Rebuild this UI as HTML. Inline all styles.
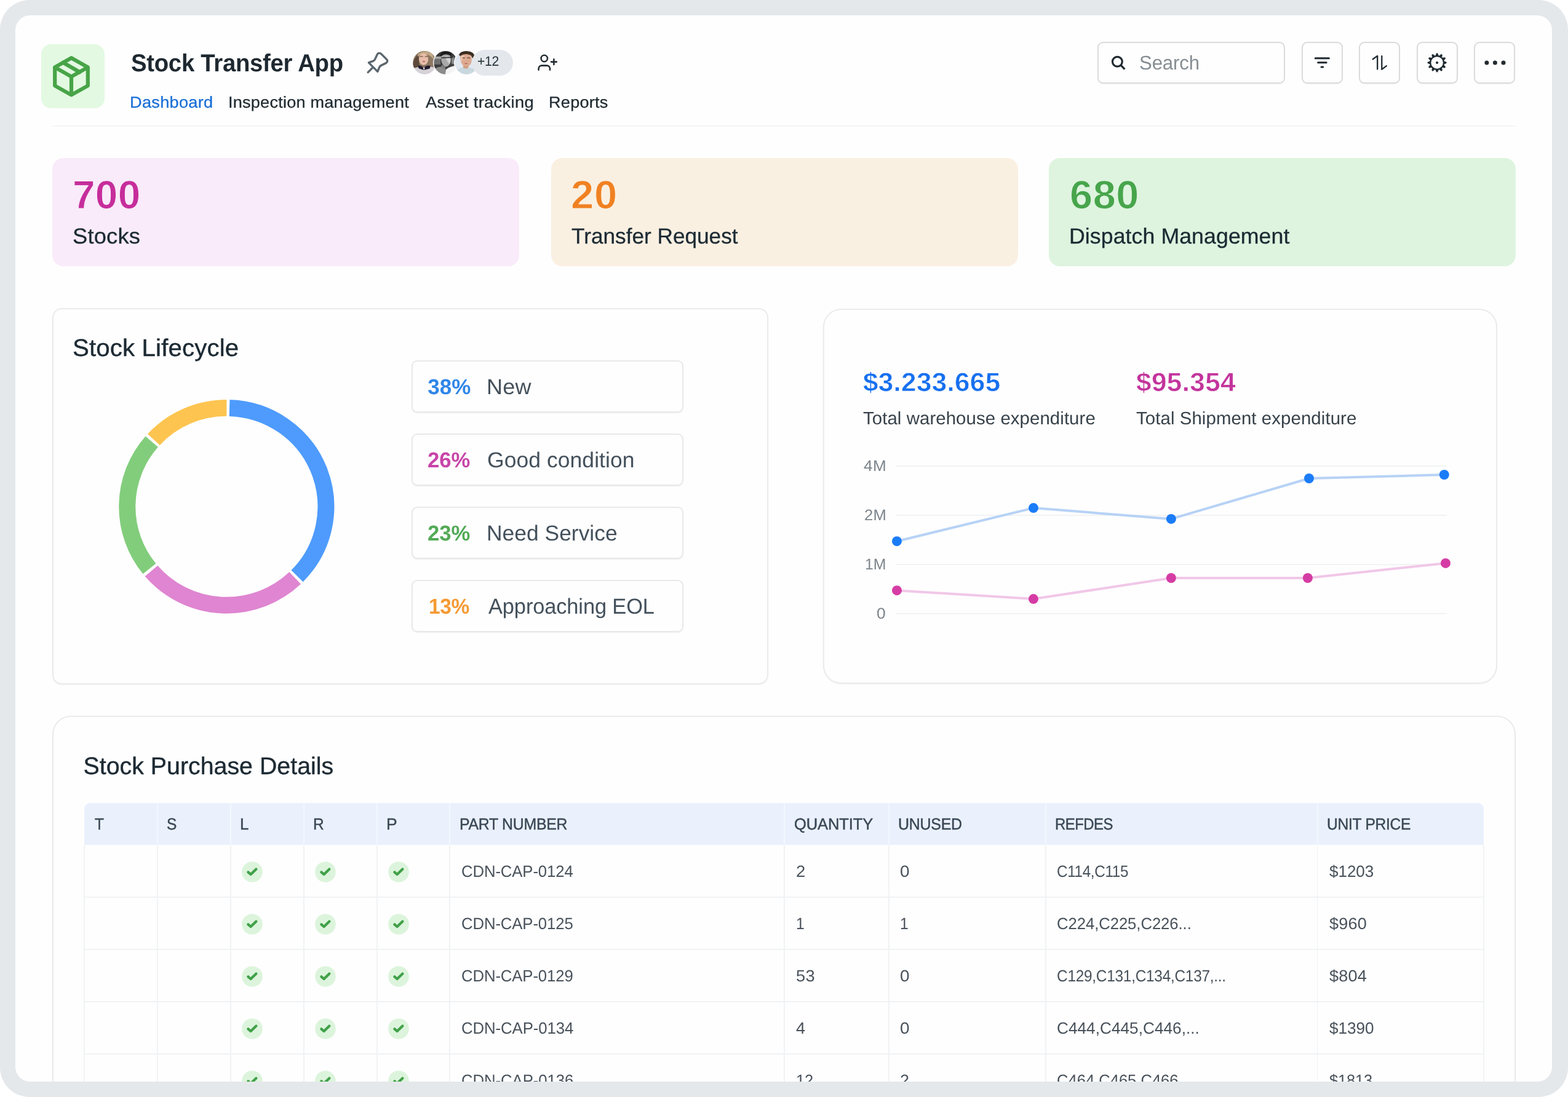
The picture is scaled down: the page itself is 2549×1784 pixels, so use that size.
<!DOCTYPE html>
<html lang="en">
<head>
<meta charset="utf-8">
<title>Stock Transfer App</title>
<style>
*{box-sizing:border-box;margin:0;padding:0}
html,body{width:2549px;height:1784px;background:#fff;overflow:hidden}
body{position:relative;font-family:"Liberation Sans",sans-serif;color:#1c2a33}
.frame{position:absolute;left:0;top:0;width:2549px;height:1784px;background:#e5e8eb;border-radius:48px}
.panel{position:absolute;left:25px;top:25px;width:2498px;height:1734px;background:#fefefe;border-radius:24px;overflow:hidden}
.page{position:absolute;left:-25px;top:-25px;width:2549px;height:1784px;will-change:transform}
.abs{position:absolute}
.t{position:absolute;white-space:nowrap;line-height:1;transform-origin:0 0;text-rendering:geometricPrecision}
.logo{left:66.5px;top:72px;width:103.5px;height:104px;border-radius:16px;background:#e3f9e2}
.hr{left:84.5px;top:203.8px;width:2379px;height:1.8px;background:#f3f5f6}
.search{left:1784px;top:68px;width:305.3px;height:67.8px;border:2.3px solid #d9dbdc;border-radius:9px;box-shadow:0 1px 1.5px rgba(16,24,40,.06)}
.btn{top:68px;width:67px;height:67.8px;border:2.3px solid #d9dbdc;border-radius:9px;box-shadow:0 1px 1.5px rgba(16,24,40,.06)}
.pill{left:767.4px;top:81px;width:66.4px;height:41.8px;border-radius:21px;background:#e4e8ec}
.stat{top:257px;width:759px;height:176px;border-radius:18px}
.card{border:2px solid #e9ebec;background:#fefefe;box-shadow:0 1px 2px rgba(16,24,40,.05)}
.leg{left:669px;width:442px;height:85.4px;border:2px solid #e7e9ea;border-radius:9px;box-shadow:0 1px 1.5px rgba(16,24,40,.07)}
.grid{left:1456px;width:896px;height:2px;background:#f2f3f4}
.vl{top:1374.3px;width:1.8px;height:400px;background:#f0f2f4}
.hl{left:137px;width:2275px;height:1.8px;background:#f0f2f4}
</style>
</head>
<body>
<div class="frame"></div>
<div class="panel"><div class="page">

<div class="abs logo"></div>
<svg class="abs" style="left:80px;top:86px" width="72" height="76" viewBox="80 86 72 76" fill="none" stroke="#47a447" stroke-width="6.2" stroke-linejoin="round" stroke-linecap="round">
  <path d="M116 94.2 L142.8 109.4 L142.8 139.4 L116 154.4 L89.2 139.4 L89.2 109.4 Z"/>
  <path d="M89.6 109.6 L116 124.6 L142.4 109.6 M116 124.6 L116 154"/>
  <path d="M102.6 101.8 L129.6 117.2"/>
</svg>
<svg class="abs" style="left:592px;top:80px" width="44" height="44" viewBox="592 80 44 44" fill="none" stroke="#5a666f" stroke-width="3.4" stroke-linejoin="round" stroke-linecap="round">
  <path d="M598.2 117.6 L606.2 109.6"/>
  <path d="M599.4 101.9 L606.4 99.4 C608 98.8 608.9 98 609.6 96.4 L613.2 88.6 C614.4 86 617.6 85.6 619.6 87.6 L628.4 96.4 C630.4 98.4 630 101.4 627.4 102.6 L619.6 106.4 C618 107.2 617.2 108 616.6 109.6 L613.8 116.4 Z"/>
</svg>
<svg class="abs" style="left:666px;top:78px" width="116" height="48" viewBox="666 78 116 48">
  <filter id="bl" x="-10%" y="-10%" width="120%" height="120%"><feGaussianBlur stdDeviation="0.75"/></filter>
  <clipPath id="c1"><circle cx="690.2" cy="101.9" r="19"/></clipPath>
  <clipPath id="c2"><circle cx="724.2" cy="101.9" r="19"/></clipPath>
  <clipPath id="c3"><circle cx="758.2" cy="101.9" r="19"/></clipPath>
  <g clip-path="url(#c1)"><g filter="url(#bl)" transform="translate(671.2 82.9)">
    <rect x="-3" y="-3" width="44" height="44" fill="#cbbfb8"/>
    <path d="M-2 30 Q-1 6 10 1 Q20 -3 31 3 Q40 10 40 30 Z" fill="#8d7764"/>
    <path d="M-2 30 Q1 10 9 6 L11 27 Z" fill="#5f4a3b"/>
    <path d="M8 5 Q19 -3 31 4 Q34 8 33 13 Q26 4 17 5 Q12 5 8 9 Z" fill="#c3aa86"/>
    <ellipse cx="17.4" cy="13.2" rx="7.6" ry="9.6" fill="#e6bda9"/>
    <path d="M11.5 9.5 Q14 8 16.5 9.6 M19.5 9.6 Q22 8 24.5 9.5" stroke="#7a5a48" stroke-width="1.3" fill="none"/>
    <ellipse cx="17.8" cy="17" rx="2.4" ry="1" fill="#b8665f"/>
    <path d="M-3 30 Q8 24 18 27 Q30 23 41 30 L41 41 L-3 41 Z" fill="#d6d2d8"/>
    <path d="M8.5 24 Q13 22.5 17.5 27.5 Q22 22.5 28.5 24 L27.5 28.6 L17.8 31 L9.5 28.4 Z" fill="#201c2e"/>
    <path d="M16.4 27 L18 31.6 L19.6 27 Z" fill="#e9e3e6"/>
  </g></g>
  <circle cx="724.2" cy="101.9" r="20.3" fill="#fefefe"/>
  <g clip-path="url(#c2)"><g filter="url(#bl)" transform="translate(705.2 82.9)">
    <rect x="-3" y="-3" width="44" height="44" fill="#3a3a3a"/>
    <rect x="-3" y="9" width="16" height="4" fill="#a8a8a8"/>
    <rect x="-3" y="13" width="14" height="9" fill="#6e6e6e"/>
    <rect x="27" y="8" width="14" height="15" fill="#444"/>
    <rect x="29" y="10" width="4" height="11" fill="#8a8a8a"/>
    <path d="M10 8 Q12 0 21 0.6 Q29 1 29 9 L27 7 Q20 4 13 8 Z" fill="#1b1b1b"/>
    <path d="M12.5 8 Q19 3.5 26.5 7.5 Q29 15 26 21 Q23 26 18.5 25.5 Q13 22 12 15 Z" fill="#a9a9a9"/>
    <path d="M19 9 Q25 8 27 12 Q28 17 25.5 21 Q22 18 20 13 Z" fill="#d0d0d0"/>
    <path d="M12 11 L31 10.4" stroke="#262626" stroke-width="1.5"/>
    <path d="M14 22 L19 25.5 L19 30 L10 27 Z" fill="#7a7a7a"/>
    <path d="M-3 34 Q4 25 12 26 L20 30 L19 41 L-3 41 Z" fill="#8b8b8b"/>
    <path d="M20 30 Q24 25 41 23 L41 41 L18 41 Z" fill="#f4f4f4"/>
  </g></g>
  <circle cx="758.2" cy="101.9" r="20.3" fill="#fefefe"/>
  <g clip-path="url(#c3)"><g filter="url(#bl)" transform="translate(739.2 82.9)">
    <rect x="-3" y="-3" width="44" height="44" fill="#e1e7f1"/>
    <path d="M7 6 Q10 -1 20 0 Q28 0 31 5 Q33 9 30 14 L27 8 Q18 3 9 9 Z" fill="#3c2d24"/>
    <path d="M8.6 8 Q17 2.6 26.5 7 Q29 14 26.4 20 Q23 26.5 18 26 Q11.5 24 9.6 16 Z" fill="#dcaa90"/>
    <path d="M10 9 Q13 6.5 16 8 Q12.5 12 11.5 18 Q9.5 14 10 9 Z" fill="#efc9b3"/>
    <path d="M12.5 11.6 Q14.5 10.4 16.5 11.6 M20 11.6 Q22.5 10.4 25 11.8" stroke="#5d4033" stroke-width="1.2" fill="none"/>
    <ellipse cx="18.6" cy="20.4" rx="2.6" ry="0.9" fill="#b76a61"/>
    <path d="M14 24 L22 25 L23 29 L13 29 Z" fill="#d09f86"/>
    <path d="M1 34 Q8 26 14 27 Q18 30 23 27 Q31 27 39 36 L39 41 L1 41 Z" fill="#c9d8de"/>
  </g></g>
</svg>
<div class="abs pill"></div>
<svg class="abs" style="left:870px;top:85px" width="40" height="34" viewBox="870 85 40 34" fill="none" stroke="#232d34" stroke-width="2.6" stroke-linecap="round" stroke-linejoin="round">
  <circle cx="884.8" cy="95" r="5.2"/>
  <path d="M875.6 113.6 L875.6 111.6 C875.6 108.8 877.8 106.6 880.6 106.6 L889 106.6 C891.8 106.6 894 108.8 894 111.6 L894 113.6"/>
  <path d="M900.4 96.2 L900.4 105 M896 100.6 L904.8 100.6"/>
</svg>
<div class="abs hr"></div>
<div class="abs search"></div>
<svg class="abs" style="left:1802px;top:86px" width="32" height="32" viewBox="1802 86 32 32" fill="none" stroke="#1f2a30" stroke-width="3.2">
  <circle cx="1816.4" cy="100.2" r="7.9"/>
  <path d="M1822.2 106.2 L1828.4 112.6"/>
</svg>
<div class="abs btn" style="left:2115.5px"></div>
<div class="abs btn" style="left:2209.3px"></div>
<div class="abs btn" style="left:2302.7px"></div>
<div class="abs btn" style="left:2396.4px"></div>
<svg class="abs" style="left:2130px;top:86px" width="40" height="32" viewBox="2130 86 40 32" fill="none" stroke="#1f2a30" stroke-width="3" stroke-linecap="round">
  <path d="M2138.2 94.7 L2160.4 94.7 M2142.6 101.8 L2156.2 101.8 M2148 108.9 L2150.8 108.9"/>
</svg>
<svg class="abs" style="left:2224px;top:86px" width="40" height="32" viewBox="2224 86 40 32" fill="none" stroke="#1f2a30" stroke-width="2.3" stroke-linecap="round" stroke-linejoin="round">
  <path d="M2231.7 96.3 L2239.2 90.9 L2239.2 112.6"/>
  <path d="M2246.3 91.2 L2246.3 112.9 L2253.9 107.2"/>
</svg>
<svg class="abs" style="left:2318px;top:84px" width="36" height="36" viewBox="2318 84 36 36">
  <g transform="translate(2336.1 101.9)" fill="#1f2a30" stroke="#1f2a30" stroke-width="0.7" stroke-linejoin="round">
    <path transform="rotate(0)" d="M-2.5 -11 L-0.9 -14.9 Q0 -15.9 0.9 -14.9 L2.5 -11 Z"/>
    <path transform="rotate(30)" d="M-2.5 -11 L-0.9 -14.9 Q0 -15.9 0.9 -14.9 L2.5 -11 Z"/>
    <path transform="rotate(60)" d="M-2.5 -11 L-0.9 -14.9 Q0 -15.9 0.9 -14.9 L2.5 -11 Z"/>
    <path transform="rotate(90)" d="M-2.5 -11 L-0.9 -14.9 Q0 -15.9 0.9 -14.9 L2.5 -11 Z"/>
    <path transform="rotate(120)" d="M-2.5 -11 L-0.9 -14.9 Q0 -15.9 0.9 -14.9 L2.5 -11 Z"/>
    <path transform="rotate(150)" d="M-2.5 -11 L-0.9 -14.9 Q0 -15.9 0.9 -14.9 L2.5 -11 Z"/>
    <path transform="rotate(180)" d="M-2.5 -11 L-0.9 -14.9 Q0 -15.9 0.9 -14.9 L2.5 -11 Z"/>
    <path transform="rotate(210)" d="M-2.5 -11 L-0.9 -14.9 Q0 -15.9 0.9 -14.9 L2.5 -11 Z"/>
    <path transform="rotate(240)" d="M-2.5 -11 L-0.9 -14.9 Q0 -15.9 0.9 -14.9 L2.5 -11 Z"/>
    <path transform="rotate(270)" d="M-2.5 -11 L-0.9 -14.9 Q0 -15.9 0.9 -14.9 L2.5 -11 Z"/>
    <path transform="rotate(300)" d="M-2.5 -11 L-0.9 -14.9 Q0 -15.9 0.9 -14.9 L2.5 -11 Z"/>
    <path transform="rotate(330)" d="M-2.5 -11 L-0.9 -14.9 Q0 -15.9 0.9 -14.9 L2.5 -11 Z"/>
    <circle r="10.7" fill="none" stroke-width="1.9"/>
    <circle r="1.75"/>
  </g>
</svg>
<svg class="abs" style="left:2410px;top:94px" width="40" height="16" viewBox="2410 94 40 16" fill="#232b30">
  <circle cx="2416.9" cy="102" r="3.5"/><circle cx="2430.4" cy="102" r="3.5"/><circle cx="2444" cy="102" r="3.5"/>
</svg>


<div class="abs stat" style="left:85px;background:#f9ebfa"></div>
<div class="abs stat" style="left:895.5px;background:#faf0e2"></div>
<div class="abs stat" style="left:1705px;background:#def4df"></div>


<div class="abs card" style="left:85px;top:501.4px;width:1163.9px;height:611.2px;border-radius:15.5px"></div>
<svg class="abs" style="left:180px;top:636px" width="378" height="378" viewBox="180 636 378 378" fill="none" stroke-width="27.0">
<g transform="translate(0 5.883) scale(1 0.9929)">
  <path d="M373.11 662.32 A161.55 161.55 0 0 1 483.06 937.55" stroke="#4e9bfd"/>
  <path d="M479.68 940.87 A161.55 161.55 0 0 1 245.95 929.23" stroke="#df85d1"/>
  <path d="M242.91 925.60 A161.55 161.55 0 0 1 246.72 717.47" stroke="#82cd7c"/>
  <path d="M249.89 713.95 A161.55 161.55 0 0 1 368.38 662.25" stroke="#fdc450"/>
</g></svg>
<div class="abs leg" style="top:585.7px"></div>
<div class="abs leg" style="top:704.7px"></div>
<div class="abs leg" style="top:823.7px"></div>
<div class="abs leg" style="top:942.7px"></div>


<div class="abs card" style="left:1337.9px;top:501.9px;width:1096.3px;height:609.8px;border-radius:29.5px"></div>
<div class="abs grid" style="top:756.8px"></div>
<div class="abs grid" style="top:836.8px"></div>
<div class="abs grid" style="top:916.8px"></div>
<div class="abs grid" style="top:996.8px"></div>
<svg class="abs" style="left:1440px;top:750px" width="930" height="250" viewBox="1440 750 930 250">
  <polyline points="1458.0,880.2 1680.0,826.1 1903.9,843.9 2128.0,778.0 2347.8,772.0" fill="none" stroke="#b7d2f6" stroke-width="4" stroke-linejoin="round"/>
  <circle cx="1458.0" cy="880.2" r="8" fill="#1b7cf7"/>
  <circle cx="1680.0" cy="826.1" r="8" fill="#1b7cf7"/>
  <circle cx="1903.9" cy="843.9" r="8" fill="#1b7cf7"/>
  <circle cx="2128.0" cy="778.0" r="8" fill="#1b7cf7"/>
  <circle cx="2347.8" cy="772.0" r="8" fill="#1b7cf7"/>
  <polyline points="1458.0,960.2 1680.0,974.1 1903.9,940.0 2125.9,940.0 2350.0,915.9" fill="none" stroke="#f1c7e8" stroke-width="4" stroke-linejoin="round"/>
  <circle cx="1458.0" cy="960.2" r="8" fill="#d53ca4"/>
  <circle cx="1680.0" cy="974.1" r="8" fill="#d53ca4"/>
  <circle cx="1903.9" cy="940.0" r="8" fill="#d53ca4"/>
  <circle cx="2125.9" cy="940.0" r="8" fill="#d53ca4"/>
  <circle cx="2350.0" cy="915.9" r="8" fill="#d53ca4"/>
</svg>


<div class="abs card" style="left:85px;top:1163.9px;width:2378.7px;height:700px;border-radius:30px"></div>
<div class="abs" style="left:137px;top:1306.3px;width:2275px;height:68px;background:#eaf1fd;border-radius:9px 9px 0 0"></div>
<div class="abs" style="left:255px;top:1306.3px;width:2px;height:68px;background:#f3f7fe"></div>
<div class="abs" style="left:374px;top:1306.3px;width:2px;height:68px;background:#f3f7fe"></div>
<div class="abs" style="left:493px;top:1306.3px;width:2px;height:68px;background:#f3f7fe"></div>
<div class="abs" style="left:611.8px;top:1306.3px;width:2px;height:68px;background:#f3f7fe"></div>
<div class="abs" style="left:730px;top:1306.3px;width:2px;height:68px;background:#f3f7fe"></div>
<div class="abs" style="left:1274px;top:1306.3px;width:2px;height:68px;background:#f3f7fe"></div>
<div class="abs" style="left:1444px;top:1306.3px;width:2px;height:68px;background:#f3f7fe"></div>
<div class="abs" style="left:1699px;top:1306.3px;width:2px;height:68px;background:#f3f7fe"></div>
<div class="abs" style="left:2140.5px;top:1306.3px;width:2px;height:68px;background:#f3f7fe"></div>
<div class="abs vl" style="left:136.1px"></div>
<div class="abs vl" style="left:255.1px"></div>
<div class="abs vl" style="left:374.1px"></div>
<div class="abs vl" style="left:493.1px"></div>
<div class="abs vl" style="left:611.9px"></div>
<div class="abs vl" style="left:730.1px"></div>
<div class="abs vl" style="left:1274.1px"></div>
<div class="abs vl" style="left:1444.1px"></div>
<div class="abs vl" style="left:1699.1px"></div>
<div class="abs vl" style="left:2140.6px"></div>
<div class="abs vl" style="left:2411.1px"></div>
<div class="abs hl" style="top:1458.3px"></div>
<div class="abs hl" style="top:1543.3px"></div>
<div class="abs hl" style="top:1628.3px"></div>
<div class="abs hl" style="top:1713.3px"></div>
<div class="abs hl" style="top:1798.3px"></div>
<svg class="abs" style="left:393.0px;top:1400.7px" width="34" height="34" viewBox="0 0 34 34"><circle cx="17" cy="17" r="16.8" fill="#dcf4dc"/><path d="M10.4 17.3 L14.6 21 L23.4 12.5" fill="none" stroke="#41a149" stroke-width="4.3" stroke-linecap="round" stroke-linejoin="round"/></svg>
<svg class="abs" style="left:512.0px;top:1400.7px" width="34" height="34" viewBox="0 0 34 34"><circle cx="17" cy="17" r="16.8" fill="#dcf4dc"/><path d="M10.4 17.3 L14.6 21 L23.4 12.5" fill="none" stroke="#41a149" stroke-width="4.3" stroke-linecap="round" stroke-linejoin="round"/></svg>
<svg class="abs" style="left:630.7px;top:1400.7px" width="34" height="34" viewBox="0 0 34 34"><circle cx="17" cy="17" r="16.8" fill="#dcf4dc"/><path d="M10.4 17.3 L14.6 21 L23.4 12.5" fill="none" stroke="#41a149" stroke-width="4.3" stroke-linecap="round" stroke-linejoin="round"/></svg>
<svg class="abs" style="left:393.0px;top:1485.7px" width="34" height="34" viewBox="0 0 34 34"><circle cx="17" cy="17" r="16.8" fill="#dcf4dc"/><path d="M10.4 17.3 L14.6 21 L23.4 12.5" fill="none" stroke="#41a149" stroke-width="4.3" stroke-linecap="round" stroke-linejoin="round"/></svg>
<svg class="abs" style="left:512.0px;top:1485.7px" width="34" height="34" viewBox="0 0 34 34"><circle cx="17" cy="17" r="16.8" fill="#dcf4dc"/><path d="M10.4 17.3 L14.6 21 L23.4 12.5" fill="none" stroke="#41a149" stroke-width="4.3" stroke-linecap="round" stroke-linejoin="round"/></svg>
<svg class="abs" style="left:630.7px;top:1485.7px" width="34" height="34" viewBox="0 0 34 34"><circle cx="17" cy="17" r="16.8" fill="#dcf4dc"/><path d="M10.4 17.3 L14.6 21 L23.4 12.5" fill="none" stroke="#41a149" stroke-width="4.3" stroke-linecap="round" stroke-linejoin="round"/></svg>
<svg class="abs" style="left:393.0px;top:1570.7px" width="34" height="34" viewBox="0 0 34 34"><circle cx="17" cy="17" r="16.8" fill="#dcf4dc"/><path d="M10.4 17.3 L14.6 21 L23.4 12.5" fill="none" stroke="#41a149" stroke-width="4.3" stroke-linecap="round" stroke-linejoin="round"/></svg>
<svg class="abs" style="left:512.0px;top:1570.7px" width="34" height="34" viewBox="0 0 34 34"><circle cx="17" cy="17" r="16.8" fill="#dcf4dc"/><path d="M10.4 17.3 L14.6 21 L23.4 12.5" fill="none" stroke="#41a149" stroke-width="4.3" stroke-linecap="round" stroke-linejoin="round"/></svg>
<svg class="abs" style="left:630.7px;top:1570.7px" width="34" height="34" viewBox="0 0 34 34"><circle cx="17" cy="17" r="16.8" fill="#dcf4dc"/><path d="M10.4 17.3 L14.6 21 L23.4 12.5" fill="none" stroke="#41a149" stroke-width="4.3" stroke-linecap="round" stroke-linejoin="round"/></svg>
<svg class="abs" style="left:393.0px;top:1655.7px" width="34" height="34" viewBox="0 0 34 34"><circle cx="17" cy="17" r="16.8" fill="#dcf4dc"/><path d="M10.4 17.3 L14.6 21 L23.4 12.5" fill="none" stroke="#41a149" stroke-width="4.3" stroke-linecap="round" stroke-linejoin="round"/></svg>
<svg class="abs" style="left:512.0px;top:1655.7px" width="34" height="34" viewBox="0 0 34 34"><circle cx="17" cy="17" r="16.8" fill="#dcf4dc"/><path d="M10.4 17.3 L14.6 21 L23.4 12.5" fill="none" stroke="#41a149" stroke-width="4.3" stroke-linecap="round" stroke-linejoin="round"/></svg>
<svg class="abs" style="left:630.7px;top:1655.7px" width="34" height="34" viewBox="0 0 34 34"><circle cx="17" cy="17" r="16.8" fill="#dcf4dc"/><path d="M10.4 17.3 L14.6 21 L23.4 12.5" fill="none" stroke="#41a149" stroke-width="4.3" stroke-linecap="round" stroke-linejoin="round"/></svg>
<svg class="abs" style="left:393.0px;top:1740.7px" width="34" height="34" viewBox="0 0 34 34"><circle cx="17" cy="17" r="16.8" fill="#dcf4dc"/><path d="M10.4 17.3 L14.6 21 L23.4 12.5" fill="none" stroke="#41a149" stroke-width="4.3" stroke-linecap="round" stroke-linejoin="round"/></svg>
<svg class="abs" style="left:512.0px;top:1740.7px" width="34" height="34" viewBox="0 0 34 34"><circle cx="17" cy="17" r="16.8" fill="#dcf4dc"/><path d="M10.4 17.3 L14.6 21 L23.4 12.5" fill="none" stroke="#41a149" stroke-width="4.3" stroke-linecap="round" stroke-linejoin="round"/></svg>
<svg class="abs" style="left:630.7px;top:1740.7px" width="34" height="34" viewBox="0 0 34 34"><circle cx="17" cy="17" r="16.8" fill="#dcf4dc"/><path d="M10.4 17.3 L14.6 21 L23.4 12.5" fill="none" stroke="#41a149" stroke-width="4.3" stroke-linecap="round" stroke-linejoin="round"/></svg>


<div class="t" style="left:212.7px;top:83.14px;font-size:40.0px;color:#1e2830;font-weight:700;letter-spacing:-0.30px;transform:scaleX(0.958)">Stock Transfer App</div>
<div class="t" style="left:211.0px;top:154.58px;font-size:25.9px;color:#1a6fd6;letter-spacing:0.25px;-webkit-text-stroke:0.3px #1a6fd6;transform:scaleX(1.05)">Dashboard</div>
<div class="t" style="left:370.8px;top:154.58px;font-size:25.9px;color:#1f2a30;letter-spacing:0.21px;-webkit-text-stroke:0.3px #1f2a30;transform:scaleX(1.047)">Inspection management</div>
<div class="t" style="left:692.2px;top:154.58px;font-size:25.9px;color:#1f2a30;letter-spacing:0.24px;-webkit-text-stroke:0.3px #1f2a30;transform:scaleX(1.06)">Asset tracking</div>
<div class="t" style="left:892.2px;top:154.58px;font-size:25.9px;color:#1f2a30;letter-spacing:0.23px;-webkit-text-stroke:0.3px #1f2a30;transform:scaleX(1.047)">Reports</div>
<div class="t" style="left:775.7px;top:89.22px;font-size:22.3px;color:#27323a;letter-spacing:-0.32px;transform:scaleX(0.947)">+12</div>
<div class="t" style="left:1851.6px;top:85.51px;font-size:32.0px;color:#868e93;letter-spacing:-0.16px;transform:scaleX(0.975)">Search</div>
<div class="t" style="left:118.1px;top:285.03px;font-size:64.7px;color:#c62d9b;font-weight:700;letter-spacing:0.27px;-webkit-text-stroke:1.0px #f9ebfa;transform:scaleX(1.016)">700</div>
<div class="t" style="left:118.1px;top:367.13px;font-size:35.4px;color:#1c2a33;letter-spacing:0.18px;-webkit-text-stroke:0.3px #1c2a33;transform:scaleX(1.026)">Stocks</div>
<div class="t" style="left:928.3px;top:285.03px;font-size:64.7px;color:#f08122;font-weight:700;letter-spacing:0.76px;-webkit-text-stroke:1.0px #faf0e2;transform:scaleX(1.035)">20</div>
<div class="t" style="left:929.3px;top:367.13px;font-size:35.4px;color:#1c2a33;letter-spacing:-0.03px;-webkit-text-stroke:0.3px #1c2a33;transform:scaleX(0.996)">Transfer Request</div>
<div class="t" style="left:1738.7px;top:285.03px;font-size:64.7px;color:#47a54b;font-weight:700;letter-spacing:0.52px;-webkit-text-stroke:1.0px #def4df;transform:scaleX(1.031)">680</div>
<div class="t" style="left:1737.5px;top:367.13px;font-size:35.4px;color:#1c2a33;letter-spacing:0.06px;-webkit-text-stroke:0.3px #1c2a33;transform:scaleX(1.009)">Dispatch Management</div>
<div class="t" style="left:117.9px;top:546.73px;font-size:39.3px;color:#1c2a33;letter-spacing:0.14px;-webkit-text-stroke:0.4px #1c2a33;transform:scaleX(1.023)">Stock Lifecycle</div>
<div class="t" style="left:695.3px;top:611.77px;font-size:35.0px;color:#2f86e8;font-weight:700;letter-spacing:-0.04px">38%</div>
<div class="t" style="left:790.9px;top:612.30px;font-size:35.2px;color:#44515c;letter-spacing:0.26px;transform:scaleX(1.023)">New</div>
<div class="t" style="left:695.3px;top:730.77px;font-size:35.0px;color:#c845a8;font-weight:700;letter-spacing:-0.10px;transform:scaleX(0.991)">26%</div>
<div class="t" style="left:791.9px;top:731.30px;font-size:35.2px;color:#44515c;letter-spacing:0.05px;transform:scaleX(1.009)">Good condition</div>
<div class="t" style="left:695.3px;top:849.77px;font-size:35.0px;color:#52aa56;font-weight:700;letter-spacing:-0.10px;transform:scaleX(0.991)">23%</div>
<div class="t" style="left:790.9px;top:850.30px;font-size:35.2px;color:#44515c;letter-spacing:0.03px;transform:scaleX(1.005)">Need Service</div>
<div class="t" style="left:696.5px;top:968.77px;font-size:35.0px;color:#f59a35;font-weight:700;letter-spacing:-0.47px;transform:scaleX(0.958)">13%</div>
<div class="t" style="left:793.9px;top:969.30px;font-size:35.2px;color:#44515c;letter-spacing:-0.14px;transform:scaleX(0.979)">Approaching EOL</div>
<div class="t" style="left:1402.7px;top:601.04px;font-size:42.6px;color:#1670ef;font-weight:700;letter-spacing:0.27px;-webkit-text-stroke:0.6px #fefefe;transform:scaleX(1.035)">$3.233.665</div>
<div class="t" style="left:1846.7px;top:601.04px;font-size:42.6px;color:#c3349c;font-weight:700;letter-spacing:0.31px;-webkit-text-stroke:0.6px #fefefe;transform:scaleX(1.037)">$95.354</div>
<div class="t" style="left:1402.7px;top:667.37px;font-size:29.1px;color:#38424a;letter-spacing:0.05px;transform:scaleX(1.012)">Total warehouse expenditure</div>
<div class="t" style="left:1846.7px;top:667.37px;font-size:29.1px;color:#38424a;letter-spacing:0.06px;transform:scaleX(1.012)">Total Shipment expenditure</div>
<div class="t" style="left:1404.0px;top:746.47px;font-size:25.2px;color:#7d858c;letter-spacing:0.39px;transform:scaleX(1.037)">4M</div>
<div class="t" style="left:1404.8px;top:826.47px;font-size:25.2px;color:#7d858c;letter-spacing:0.20px;transform:scaleX(1.019)">2M</div>
<div class="t" style="left:1406.2px;top:906.47px;font-size:25.2px;color:#7d858c;letter-spacing:-0.15px;transform:scaleX(0.985)">1M</div>
<div class="t" style="left:1425.0px;top:986.47px;font-size:25.2px;color:#7d858c;transform:scaleX(1.05)">0</div>
<div class="t" style="left:135.5px;top:1226.63px;font-size:39.3px;color:#1c2a33;letter-spacing:0.02px;-webkit-text-stroke:0.4px #1c2a33">Stock Purchase Details</div>
<div class="t" style="left:154.2px;top:1326.61px;font-size:26.1px;color:#3b4856;-webkit-text-stroke:0.45px #3b4856;transform:scaleX(0.94)">T</div>
<div class="t" style="left:271.4px;top:1326.61px;font-size:26.1px;color:#3b4856;-webkit-text-stroke:0.45px #3b4856;transform:scaleX(0.94)">S</div>
<div class="t" style="left:390.3px;top:1326.61px;font-size:26.1px;color:#3b4856;-webkit-text-stroke:0.45px #3b4856;transform:scaleX(0.992)">L</div>
<div class="t" style="left:509.0px;top:1326.61px;font-size:26.1px;color:#3b4856;-webkit-text-stroke:0.45px #3b4856;transform:scaleX(0.94)">R</div>
<div class="t" style="left:628.0px;top:1326.61px;font-size:26.1px;color:#3b4856;-webkit-text-stroke:0.45px #3b4856;transform:scaleX(1.014)">P</div>
<div class="t" style="left:747.0px;top:1326.61px;font-size:26.1px;color:#3b4856;letter-spacing:-0.29px;-webkit-text-stroke:0.45px #3b4856;transform:scaleX(0.953)">PART NUMBER</div>
<div class="t" style="left:1291.4px;top:1326.61px;font-size:26.1px;color:#3b4856;letter-spacing:-0.13px;-webkit-text-stroke:0.45px #3b4856;transform:scaleX(0.979)">QUANTITY</div>
<div class="t" style="left:1460.0px;top:1326.61px;font-size:26.1px;color:#3b4856;letter-spacing:-0.31px;-webkit-text-stroke:0.45px #3b4856;transform:scaleX(0.958)">UNUSED</div>
<div class="t" style="left:1714.6px;top:1326.61px;font-size:26.1px;color:#3b4856;letter-spacing:-0.58px;-webkit-text-stroke:0.45px #3b4856;transform:scaleX(0.918)">REFDES</div>
<div class="t" style="left:2156.7px;top:1326.61px;font-size:26.1px;color:#3b4856;letter-spacing:-0.31px;-webkit-text-stroke:0.45px #3b4856;transform:scaleX(0.944)">UNIT PRICE</div>
<div class="t" style="left:749.9px;top:1404.45px;font-size:26.4px;color:#49525b;letter-spacing:-0.14px;transform:scaleX(0.976)">CDN-CAP-0124</div>
<div class="t" style="left:1293.9px;top:1404.45px;font-size:26.4px;color:#49525b;transform:scaleX(1.042)">2</div>
<div class="t" style="left:1463.2px;top:1404.45px;font-size:26.4px;color:#49525b;transform:scaleX(1.06)">0</div>
<div class="t" style="left:1718.1px;top:1404.45px;font-size:26.4px;color:#49525b;letter-spacing:-0.42px;transform:scaleX(0.923)">C114,C115</div>
<div class="t" style="left:2160.7px;top:1404.45px;font-size:26.4px;color:#49525b;letter-spacing:-0.07px;transform:scaleX(0.989)">$1203</div>
<div class="t" style="left:749.9px;top:1489.45px;font-size:26.4px;color:#49525b;letter-spacing:-0.14px;transform:scaleX(0.976)">CDN-CAP-0125</div>
<div class="t" style="left:1294.0px;top:1489.45px;font-size:26.4px;color:#49525b;transform:scaleX(0.94)">1</div>
<div class="t" style="left:1463.3px;top:1489.45px;font-size:26.4px;color:#49525b;transform:scaleX(0.94)">1</div>
<div class="t" style="left:1718.1px;top:1489.45px;font-size:26.4px;color:#49525b;letter-spacing:-0.11px;transform:scaleX(0.976)">C224,C225,C226...</div>
<div class="t" style="left:2160.7px;top:1489.45px;font-size:26.4px;color:#49525b;letter-spacing:0.17px;transform:scaleX(1.027)">$960</div>
<div class="t" style="left:749.9px;top:1574.45px;font-size:26.4px;color:#49525b;letter-spacing:-0.14px;transform:scaleX(0.976)">CDN-CAP-0129</div>
<div class="t" style="left:1293.9px;top:1574.45px;font-size:26.4px;color:#49525b;letter-spacing:0.30px;transform:scaleX(1.033)">53</div>
<div class="t" style="left:1463.2px;top:1574.45px;font-size:26.4px;color:#49525b;transform:scaleX(1.06)">0</div>
<div class="t" style="left:1718.1px;top:1574.45px;font-size:26.4px;color:#49525b;letter-spacing:-0.33px;transform:scaleX(0.928)">C129,C131,C134,C137,...</div>
<div class="t" style="left:2160.7px;top:1574.45px;font-size:26.4px;color:#49525b;letter-spacing:0.17px;transform:scaleX(1.027)">$804</div>
<div class="t" style="left:749.9px;top:1659.45px;font-size:26.4px;color:#49525b;letter-spacing:-0.12px;transform:scaleX(0.978)">CDN-CAP-0134</div>
<div class="t" style="left:1293.9px;top:1659.45px;font-size:26.4px;color:#49525b;transform:scaleX(1.031)">4</div>
<div class="t" style="left:1463.2px;top:1659.45px;font-size:26.4px;color:#49525b;transform:scaleX(1.06)">0</div>
<div class="t" style="left:1718.1px;top:1659.45px;font-size:26.4px;color:#49525b;letter-spacing:-0.02px;transform:scaleX(0.995)">C444,C445,C446,...</div>
<div class="t" style="left:2160.7px;top:1659.45px;font-size:26.4px;color:#49525b;letter-spacing:-0.05px;transform:scaleX(0.992)">$1390</div>
<div class="t" style="left:749.9px;top:1744.45px;font-size:26.4px;color:#49525b;letter-spacing:-0.12px;transform:scaleX(0.978)">CDN-CAP-0136</div>
<div class="t" style="left:1294.0px;top:1744.45px;font-size:26.4px;color:#49525b;letter-spacing:-0.25px;transform:scaleX(0.971)">12</div>
<div class="t" style="left:1463.2px;top:1744.45px;font-size:26.4px;color:#49525b;transform:scaleX(1.025)">2</div>
<div class="t" style="left:1718.1px;top:1744.45px;font-size:26.4px;color:#49525b;letter-spacing:-0.11px;transform:scaleX(0.976)">C464,C465,C466...</div>
<div class="t" style="left:2160.7px;top:1744.45px;font-size:26.4px;color:#49525b;letter-spacing:-0.20px;transform:scaleX(0.966)">$1813</div>

</div></div>
</body>
</html>
